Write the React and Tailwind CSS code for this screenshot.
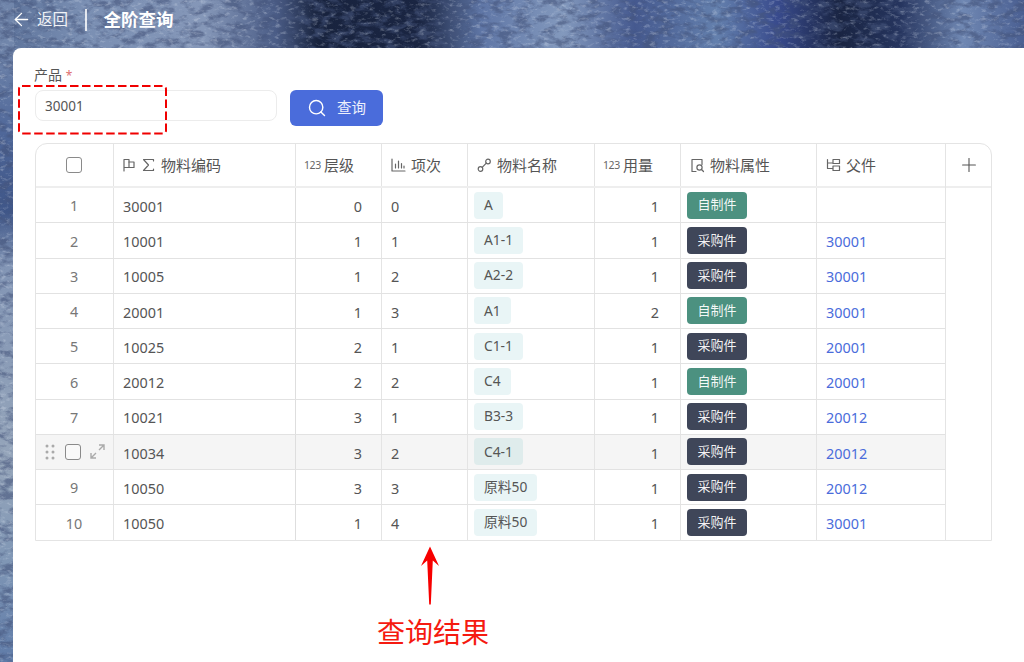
import React from "react";
import { ArrowLeft, Search, Plus } from "lucide-react";

const rows = [
  ["1", "30001", "0", "0", "A", "1", "自制件", ""],
  ["2", "10001", "1", "1", "A1-1", "1", "采购件", "30001"],
  ["3", "10005", "1", "2", "A2-2", "1", "采购件", "30001"],
  ["4", "20001", "1", "3", "A1", "2", "自制件", "30001"],
  ["5", "10025", "2", "1", "C1-1", "1", "采购件", "20001"],
  ["6", "20012", "2", "2", "C4", "1", "自制件", "20001"],
  ["7", "10021", "3", "1", "B3-3", "1", "采购件", "20012"],
  ["8", "10034", "3", "2", "C4-1", "1", "采购件", "20012"],
  ["9", "10050", "3", "3", "原料50", "1", "采购件", "20012"],
  ["10", "10050", "1", "4", "原料50", "1", "采购件", "30001"],
];

const ic = { fill: "none", stroke: "#666", strokeWidth: 1.2, strokeLinecap: "round", strokeLinejoin: "round" };

const Flag = () => (
  <svg width="14" height="14" viewBox="0 0 14 14" {...ic}><path d="M2 13V1.500h5v8H2" /><path d="M7 4h5v5.500H7" /></svg>
);
const Sigma = () => (
  <svg width="13" height="14" viewBox="0 0 13 14" {...ic}><path d="M11.500 3V1.500h-10L6.500 7l-5 5.500h10V11" /></svg>
);
const Num = () => <span className="text-[10.5px] text-[#666] leading-none tracking-[-0.4px] w-[16px] -ml-[1px] -mr-[1px]">123</span>;
const Bars = () => (
  <svg width="15" height="14" viewBox="0 0 15 14" {...ic}><path d="M1 1v12h13" /><path d="M4.500 10V6M7.500 10V3M10.500 10V5.500M13 10V8" /></svg>
);
const LinkIc = () => (
  <svg width="15" height="15" viewBox="0 0 15 15" {...ic}><circle cx="3.500" cy="11" r="2.300" /><circle cx="11" cy="3.500" r="2.300" /><path d="M5.200 9.300l4.100-4.100" /></svg>
);
const DocSearch = () => (
  <svg width="15" height="15" viewBox="0 0 15 15" {...ic}><path d="M6 13.500H2V1.500h10v5" /><circle cx="9.500" cy="9.500" r="2.600" /><path d="M11.500 11.500l2 2" /></svg>
);
const Tree = () => (
  <svg width="15" height="14" viewBox="0 0 15 14" {...ic}><path d="M1.500 1.500v9h5M1.500 5h5" /><rect x="7" y="1.500" width="6.500" height="4" /><rect x="7" y="8" width="6.500" height="4.500" /></svg>
);
const Expand = () => (
  <svg width="17" height="17" viewBox="0 0 17 17" fill="none" stroke="#aaa" strokeWidth="1.400"><path d="M10 2h5v5M15 2l-5 5M2 10v5h5M2 15l5-5" /></svg>
);
const Grip = () => (
  <svg width="10" height="16" viewBox="0 0 10 16" fill="#aaa"><circle cx="2" cy="2" r="1.500" /><circle cx="8" cy="2" r="1.500" /><circle cx="2" cy="8" r="1.500" /><circle cx="8" cy="8" r="1.500" /><circle cx="2" cy="14" r="1.500" /><circle cx="8" cy="14" r="1.500" /></svg>
);
const Check = () => <span className="block w-4 h-4 rounded-[3px] border-[1.5px] border-[#8a8a8a] bg-white/40" />;

function Header({ w, icons, label, noBorder }) {
  return (
    <div className={`${w} flex items-center h-full pl-[9px] gap-[5px] ${noBorder ? "" : "border-r border-[#e4e4e4]"}`}>
      {icons}
      <span>{label}</span>
    </div>
  );
}

function Row({ r, hover }) {
  const self = r[6] === "自制件";
  return (
    <div className={`flex h-[35.25px] last:h-[34.5px] items-stretch border-b last:border-b-0 border-[#e2e2e2] text-[14.4px] text-[#555] ${hover ? "bg-[#f5f5f5]" : ""}`}>
      <div className="w-[78px] flex items-center justify-center pr-[1px] border-r border-[#e4e4e4] text-[#777]">
        {hover ? (
          <div className="flex items-center gap-[10px] pl-[3px]">
            <Grip />
            <Check />
            <span className="-ml-[2px] flex"><Expand /></span>
          </div>
        ) : (
          <span className="pt-[2px]">{r[0]}</span>
        )}
      </div>
      <div className="w-[182px] flex items-center pl-[9px] pt-[3px] border-r-[1.5px] border-[#dedede]">{r[1]}</div>
      <div className="w-[86px] flex items-center justify-end pr-[19px] pt-[3px] border-r border-[#e4e4e4]">{r[2]}</div>
      <div className="w-[86px] flex items-center pl-[9px] pt-[3px] border-r border-[#e4e4e4]">{r[3]}</div>
      <div className="w-[127px] flex items-center pl-[6px] border-r border-[#e4e4e4]">
        <span className={`h-[27px] px-[10px] rounded-[4px] flex items-center text-[13.8px] ${hover ? "bg-[#dfecec]" : "bg-[#e9f5f6]"}`}>{r[4]}</span>
      </div>
      <div className="w-[86px] flex items-center justify-end pr-[21px] pt-[3px] border-r border-[#e4e4e4]">{r[5]}</div>
      <div className="w-[136px] flex items-center pl-[6px] border-r border-[#e4e4e4]">
        <span className={`w-[60px] h-[27px] rounded-[4px] flex items-center justify-center text-[13px] text-white/95 ${self ? "bg-[#4c9180]" : "bg-[#3f4659]"}`}>{r[6]}</span>
      </div>
      <div className="w-[128px] flex items-center pl-[9px] pt-[3px] text-[#4a6cdb]">{r[7]}</div>
    </div>
  );
}

export default function App() {
  return (
    <div
      className="relative w-[1024px] h-[662px] overflow-hidden flex flex-col"
      style={{ fontFamily: '"Noto Sans", "Noto Sans CJK SC", sans-serif' }}
    >
      {/* painted wallpaper */}
      <svg className="absolute inset-0 w-full h-full" viewBox="0 0 1024 662" preserveAspectRatio="none">
        <defs>
          <linearGradient id="top" x1="0" x2="1" y1="0" y2="0">
            <stop offset="0" stopColor="#5a7098" />
            <stop offset="0.08" stopColor="#7a8fb3" />
            <stop offset="0.2" stopColor="#8597b8" />
            <stop offset="0.27" stopColor="#4a5c86" />
            <stop offset="0.31" stopColor="#18233e" />
            <stop offset="0.41" stopColor="#1a2542" />
            <stop offset="0.47" stopColor="#5f76a6" />
            <stop offset="0.55" stopColor="#8399bd" />
            <stop offset="0.62" stopColor="#45598f" />
            <stop offset="0.7" stopColor="#6480ad" />
            <stop offset="0.76" stopColor="#384a8c" />
            <stop offset="0.82" stopColor="#192442" />
            <stop offset="0.88" stopColor="#26355f" />
            <stop offset="0.94" stopColor="#7088b3" />
            <stop offset="1" stopColor="#4a5f92" />
          </linearGradient>
          <linearGradient id="left" x1="0" x2="0" y1="0" y2="1">
            <stop offset="0.07" stopColor="#7186ab" />
            <stop offset="0.2" stopColor="#4f6799" />
            <stop offset="0.32" stopColor="#3f5688" />
            <stop offset="0.4" stopColor="#8295b5" />
            <stop offset="0.7" stopColor="#95a5ba" />
            <stop offset="0.85" stopColor="#7f96b5" />
            <stop offset="1" stopColor="#5f7ba8" />
          </linearGradient>
          <filter id="paint" x="0" y="0" width="100%" height="100%">
            <feTurbulence type="fractalNoise" baseFrequency="0.07 0.13" numOctaves="5" seed="7" />
            <feColorMatrix values="0 0 0 0 0.06  0 0 0 0 0.09  0 0 0 0 0.2  4 0 0 0 -1.800" />
          </filter>
          <filter id="light" x="0" y="0" width="100%" height="100%">
            <feTurbulence type="fractalNoise" baseFrequency="0.16 0.28" numOctaves="5" seed="21" />
            <feColorMatrix values="0 0 0 0 0.72  0 0 0 0 0.78  0 0 0 0 0.88  3.500 0 0 0 -1.900" />
          </filter>
        </defs>
        <rect width="1024" height="662" fill="url(#top)" />
        <rect width="14" height="662" fill="url(#left)" />
        <rect width="1024" height="662" filter="url(#paint)" opacity="0.6" />
        <rect width="1024" height="662" filter="url(#light)" opacity="0.3" />
      </svg>

      {/* top bar */}
      <div className="relative h-[48px] shrink-0 flex items-center text-white pl-[11px] pb-[9px]">
        <ArrowLeft size={21} strokeWidth={1.5} />
        <span className="ml-[5px] text-[15.5px] text-white/90">返回</span>
        <span className="ml-[17px] w-[1.5px] h-[22px] bg-white/80" />
        <span className="ml-[17px] text-[17.5px] font-bold">全阶查询</span>
      </div>

      {/* card */}
      <div className="relative flex-1 ml-[13px] bg-white rounded-tl-[8px] pl-[22px] pt-[18px]">
        <div className="h-[18px] text-[14px] leading-[18px] text-[#555] -ml-[1px]">
          产品 <span className="text-[12px] text-[#e07070]">*</span>
        </div>
        <div className="flex items-start mt-[6px]">
          <div className="w-[242px] h-[31px] rounded-[8px] border border-[#ececec] flex items-center pl-[9px] pt-[1px] text-[13.5px] text-[#555]">30001</div>
          <button className="ml-[13px] w-[93px] h-[36px] rounded-[6px] bg-[#4a6cdb] text-white text-[14.500px] flex items-center pl-[17px] gap-[10px]">
            <Search size={20} strokeWidth={1.7} />
            <span className="text-white/90">查询</span>
          </button>
        </div>

        {/* table */}
        <div className="mt-[17px] w-[957px] border border-[#e4e4e4] rounded-t-[12px] flex overflow-hidden">
          <div className="w-[909px]">
            <div className="flex h-[44px] border-b-2 border-[#eeeeee] text-[15px] text-[#555]">
              <div className="w-[78px] flex items-center justify-center pr-[1px] border-r border-[#e4e4e4]"><Check /></div>
              <div className="w-[182px] flex items-center pl-[8px] gap-[6px] border-r border-[#e4e4e4]">
                <Flag />
                <Sigma />
                <span>物料编码</span>
              </div>
              <Header w="w-[86px]" icons={<Num />} label="层级" />
              <Header w="w-[86px]" icons={<Bars />} label="项次" />
              <Header w="w-[127px]" icons={<LinkIc />} label="物料名称" />
              <Header w="w-[86px]" icons={<Num />} label="用量" />
              <Header w="w-[136px]" icons={<DocSearch />} label="物料属性" />
              <Header w="w-[128px]" icons={<Tree />} label="父件" noBorder />
            </div>
            {rows.map((r, i) => (
              <Row key={r[0]} r={r} hover={i === 7} />
            ))}
          </div>
          <div className="w-[46px] border-l border-[#e4e4e4]">
            <div className="h-[44px] flex items-center justify-center border-b-2 border-[#eeeeee]">
              <Plus size={22} strokeWidth={1.2} color="#555" />
            </div>
          </div>
        </div>

        {/* annotations */}
        <svg className="absolute left-[5px] top-[37px]" width="150" height="50" viewBox="0 0 150 50" fill="none">
          <rect x="1" y="1" width="147" height="47.500" rx="3" stroke="#f00000" strokeWidth="2" strokeDasharray="8.500 3.500" />
        </svg>
        <svg className="absolute left-[407px] top-[498px]" width="20" height="60" viewBox="0 0 20 60">
          <path d="M10 0.500L19 20 12.800 14.500 10.800 58.500H9.200L7.200 14.500 1 20Z" fill="#f70000" />
        </svg>
        <div className="absolute left-[364px] top-[564px] text-[28px] leading-[40px] text-[#f51a10]">查询结果</div>
      </div>
    </div>
  );
}
